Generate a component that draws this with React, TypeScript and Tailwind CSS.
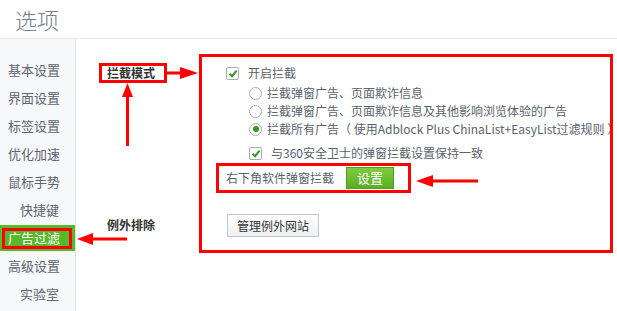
import React from "react";

const font = { fontFamily: '"Noto Sans CJK SC", "Noto Sans", sans-serif' };

function CheckBox() {
  return (
    <span className="flex h-[13px] w-[13px] shrink-0 items-center justify-center rounded-[2px] border border-[#a9aeb4] bg-white">
      <svg width="10" height="9" viewBox="0 0 10 9">
        <path d="M1.5 4.8 L4 7.2 L8.6 1.6" fill="none" stroke="#2f9a1c" strokeWidth="2" />
      </svg>
    </span>
  );
}

function Radio({ on }: { on?: boolean }) {
  return (
    <span className="flex h-[13px] w-[13px] shrink-0 items-center justify-center rounded-full border border-[#a9aeb4] bg-white">
      {on && <span className="h-[6px] w-[6px] rounded-full bg-[#2f9a1c]" />}
    </span>
  );
}

const items = ["基本设置", "界面设置", "标签设置", "优化加速", "鼠标手势", "快捷键", "广告过滤", "高级设置", "实验室"];

export default function App() {
  return (
    <div className="relative h-[311px] w-[617px] overflow-hidden bg-white text-[12px] text-[#5a626c]" style={font}>
      <div className="flex h-[39px] items-center border-b border-[#e6e8ea] pl-[15px]">
        <span className="text-[22px] font-light leading-none text-[#74808d]">选项</span>
      </div>
      <div className="flex h-[272px]">
        <div className="w-[76px] shrink-0 border-r border-[#dcdfe3] bg-[#f7f8fa] pt-[17px]">
          {items.map((t) => {
            const indent = t === "快捷键" || t === "实验室";
            if (t === "广告过滤") {
              return (
                <div key={t} className="relative my-px flex h-[26px] items-center bg-[#58b82a] pl-[8px] text-[13px] text-white">
                  {t}
                  <span className="absolute left-[2px] top-[3px] h-[21px] w-[70px] border-[3px] border-[#ff0000]" />
                </div>
              );
            }
            return (
              <div key={t} className={`flex h-[28px] items-center text-[13px] text-[#5d6570] ${indent ? "pl-[20px]" : "pl-[8px]"}`}>
                {t}
              </div>
            );
          })}
        </div>
        <div className="flex flex-1">
          <div className="w-[123px] shrink-0 pl-[23px] pt-[24px]">
            <div className="flex h-[20px] w-[68px] items-center border-[3px] border-[#ff0000] pl-[5px] text-[12px] font-bold text-[#333]">
              拦截模式
            </div>
            <div className="mt-[133px] pl-[8px] text-[12px] font-bold text-[#333]">例外排除</div>
          </div>
          <div className="mt-[15px] h-[199px] w-[414px] shrink-0 border-[3px] border-[#ff0000] pt-[7px]">
            <div className="flex h-[18px] items-center gap-[9px] pl-[24px]">
              <CheckBox />
              <span>开启拦截</span>
            </div>
            <div className="mt-[2px] pl-[47px]">
              <div className="flex h-[18px] items-center gap-[5px]">
                <Radio />
                <span>拦截弹窗广告、页面欺诈信息</span>
              </div>
              <div className="flex h-[18px] items-center gap-[5px]">
                <Radio />
                <span>拦截弹窗广告、页面欺诈信息及其他影响浏览体验的广告</span>
              </div>
              <div className="flex h-[18px] items-center gap-[5px] whitespace-nowrap">
                <Radio on />
                <span>拦截所有广告（ 使用Adblock Plus ChinaList+EasyList过滤规则 ）</span>
              </div>
              <div className="mt-[6px] flex h-[18px] items-center gap-[9px]">
                <CheckBox />
                <span>与360安全卫士的弹窗拦截设置保持一致</span>
              </div>
            </div>
            <div className="ml-[14px] mt-px flex h-[30px] w-[195px] items-center border-[3px] border-[#ff0000] pl-[7px]">
              <span className="text-[12px]">右下角软件弹窗拦截</span>
              <span className="ml-[12px] flex h-[22px] w-[48px] items-center justify-center border border-[#4f9e1e] bg-gradient-to-b from-[#7fcd3f] to-[#5aad22] text-[13px] text-white">
                设置
              </span>
            </div>
            <div className="ml-[25px] mt-[21px] flex h-[23px] w-[92px] items-center justify-center border border-[#c4c8cc] bg-gradient-to-b from-white to-[#eef0f2] text-[12px] text-[#333]">
              管理例外网站
            </div>
          </div>
        </div>
      </div>
      <svg className="pointer-events-none absolute left-0 top-0" width="617" height="311">
        <g fill="#ff0000">
          <rect x="167" y="71.5" width="15" height="3" />
          <polygon points="180,67 198,73 180,79" />
          <rect x="126" y="95" width="3" height="51" />
          <polygon points="122,97 127.5,83 133,97" />
          <rect x="90" y="237.5" width="37" height="3" />
          <polygon points="77,239 93,233 93,245" />
          <rect x="431" y="179.5" width="47" height="3" />
          <polygon points="416,181 433,175 433,187" />
          <rect x="610" y="54" width="3" height="199" />
        </g>
      </svg>
    </div>
  );
}
